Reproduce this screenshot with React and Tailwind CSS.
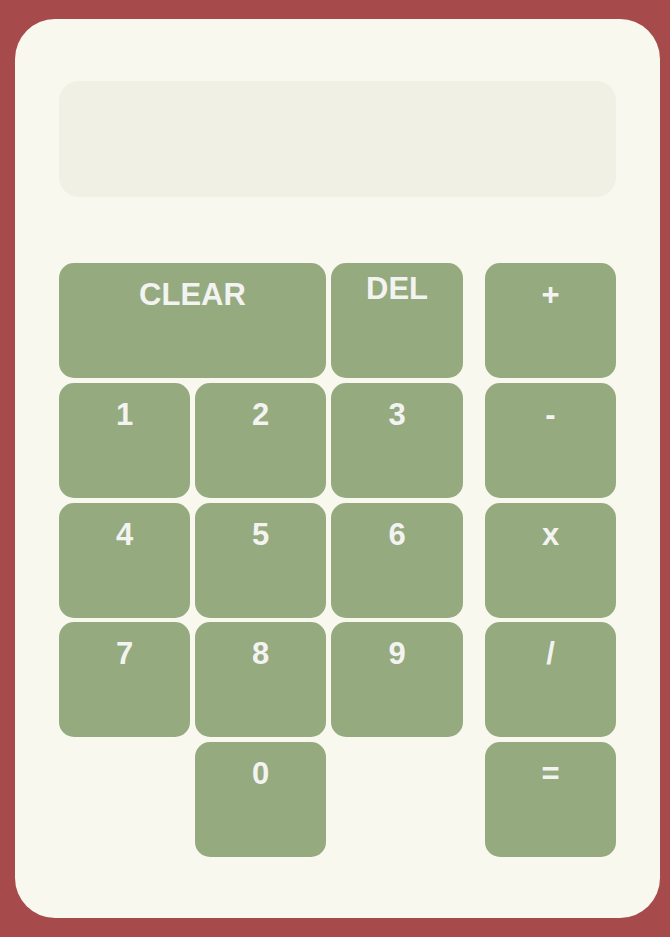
import React from "react";

const btn =
  "bg-[#95aa7f] rounded-[15px] text-[#f3f3f1] font-bold text-[31px] leading-[normal] text-center flex justify-center items-start";

function Key({ label, className = "", pt = "pt-[14px]" }) {
  return (
    <button type="button" className={`${btn} ${pt} ${className}`}>
      {label}
    </button>
  );
}

export default function App() {
  return (
    <div
      className="w-[670px] h-[937px] bg-[#a64a4c] pt-[19px] pl-[15px]"
      style={{ fontFamily: '"Liberation Sans", Arial, sans-serif' }}
    >
      <div className="w-[645px] h-[899px] bg-[#f8f8ef] rounded-[40px] px-[44px] pt-[62px]">
        <div className="h-[116px] rounded-[20px] bg-[#f0f0e5]" />
        <div className="mt-[66px] flex">
          <div className="grid grid-cols-[131px_131px_132px] grid-rows-[115px_115px_115px_115px_115px] gap-x-[5px] gap-y-[4.75px]">
            <Key label="CLEAR" className="col-span-2" />
            <Key label="DEL" pt="pt-[8px]" />
            <Key label="1" />
            <Key label="2" />
            <Key label="3" />
            <Key label="4" />
            <Key label="5" />
            <Key label="6" />
            <Key label="7" />
            <Key label="8" />
            <Key label="9" />
            <div />
            <Key label="0" />
            <div />
          </div>
          <div className="ml-[22px] grid grid-cols-[131px] grid-rows-[115px_115px_115px_115px_115px] gap-y-[4.75px]">
            <Key label="+" />
            <Key label="-" />
            <Key label="x" />
            <Key label="/" />
            <Key label="=" />
          </div>
        </div>
      </div>
    </div>
  );
}
